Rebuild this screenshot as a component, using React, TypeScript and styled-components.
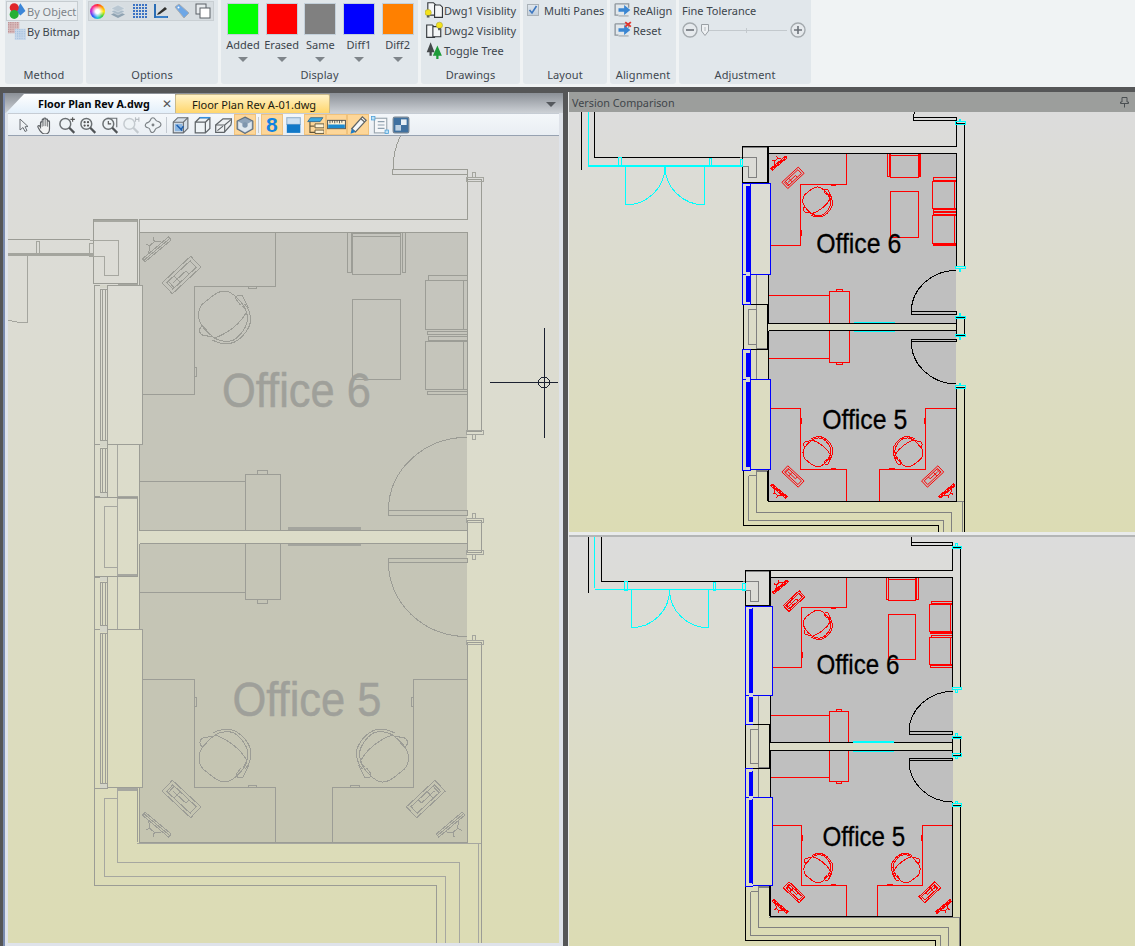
import type { ReactNode } from "react";
import styled, { createGlobalStyle } from "styled-components";

const UI_FONT = `"Noto Sans", "Open Sans", sans-serif`;

const GlobalStyle = createGlobalStyle`
	html, body {
		margin: 0;
		padding: 0;
		background: #555;
	}
`;

const Screen = styled("div")`
	width: 1135px;
	height: 946px;
	overflow: hidden;
	display: flex;
	flex-direction: column;
	background: #555657;
	font-family: ${UI_FONT};
	font-size: 11px;
	color: #3d454c;
`;

/* ---------- ribbon ---------- */

const Ribbon = styled("header")`
	height: 87px;
	flex: none;
	display: flex;
	gap: 3px;
	padding-left: 5px;
	box-sizing: border-box;
	background: #f0f3f4;
`;

const Group = styled("section")<{ $w: number }>`
	width: ${({ $w }) => $w}px;
	height: 84px;
	display: flex;
	flex-direction: column;
	background: #e1e7eb;
	border-radius: 0 0 3px 3px;
`;

const GroupBody = styled("div")`
	flex: 1;
	min-height: 0;
	position: relative;
`;

const GroupLabel = styled("div")`
	height: 18px;
	line-height: 17px;
	text-align: center;
	font-size: 11px;
	letter-spacing: 0.1px;
	color: #3f4850;
	flex: none;
`;

const Row = styled("div")<{ $pad?: number; $dim?: boolean; $boxed?: boolean }>`
	height: 20px;
	display: flex;
	align-items: center;
	gap: 1px;
	padding-left: ${({ $pad }) => $pad ?? 2}px;
	white-space: nowrap;
	color: ${({ $dim }) => ($dim ? "#7d8388" : "#3d454c")};
	box-sizing: border-box;
	${({ $boxed }) =>
		$boxed
			? `margin: 1px 5px 0 1px;
	border: 1px solid #c6ccd0;
	background: #e9edf0;
	padding-left: 1px;`
			: ""}
`;

const OptionStrip = styled("div")`
	margin: 1px 4px 0 2px;
	height: 20px;
	display: flex;
	align-items: center;
	gap: 5.3px;
	background: #d7dde1;
	border: 1px solid #c9cfd3;
	box-sizing: border-box;
	width: 126px;
`;

const OptionCell = styled("span")`
	width: 16px;
	display: flex;
	justify-content: center;
	flex: none;
`;

const Wheel = styled("span")`
	width: 15px;
	height: 15px;
	border-radius: 50%;
	background:
		radial-gradient(circle, #fff 0 18%, transparent 60%),
		conic-gradient(#ff2a2a, #ff9a00, #ffe600, #3fd23f, #1fc7d6, #2a5cff, #b02ad6, #ff2a8a, #ff2a2a);
`;

const SwatchRow = styled("div")`
	display: flex;
	padding: 3px 0 0 6px;
	gap: 6.67px;
`;

const SwatchCol = styled("div")`
	width: 32px;
	display: flex;
	flex-direction: column;
	align-items: center;
`;

const Swatch = styled("div")<{ $c: string }>`
	width: 32px;
	height: 32px;
	background: ${({ $c }) => $c};
	box-sizing: border-box;
	border: 1px solid #c3d0da;
`;

const SwatchName = styled("div")`
	margin-top: 1px;
	height: 17px;
	line-height: 17px;
	white-space: nowrap;
`;

const Caret = styled("div")`
	margin-top: 4px;
	width: 0;
	height: 0;
	border-left: 5px solid transparent;
	border-right: 5px solid transparent;
	border-top: 5px solid #7f858a;
`;

const CheckBox = styled("span")`
	width: 12px;
	height: 12px;
	margin-right: 4px;
	border: 1px solid #aab2b8;
	background: linear-gradient(#dfe6ec, #c4d0dc);
	box-sizing: border-box;
	display: flex;
	align-items: center;
	justify-content: center;
`;

const ToleranceRow = styled("div")`
	display: flex;
	align-items: center;
	height: 18px;
	margin: 1px 0 0 3px;
`;

const Track = styled("div")`
	width: 78px;
	height: 1px;
	background: #c3c9cd;
	position: relative;
	margin-right: 3px;
	&::after {
		content: "";
		position: absolute;
		left: 37px;
		top: -2px;
		width: 1px;
		height: 5px;
		background: #c3c9cd;
	}
`;

/* ---------- document side ---------- */

const Workspace = styled("main")`
	flex: 1;
	min-height: 0;
	display: flex;
	padding-top: 3px;
`;

const DocPanel = styled("section")`
	width: 560px;
	margin: 3px 0 0 3px;
	display: flex;
	flex-direction: column;
	background: #dfe3ea;
	border-left: 2px solid #7b8cb0;
	box-sizing: border-box;
`;

const TabStrip = styled("div")`
	height: 20px;
	flex: none;
	display: flex;
	align-items: flex-end;
	padding: 0 4px 0 1px;
	background: linear-gradient(#8b9097, #cdd1d6);
`;

const ActiveTab = styled("div")`
	width: 169px;
	height: 19px;
	flex: none;
	box-sizing: border-box;
	padding-left: 32px;
	display: flex;
	align-items: center;
	justify-content: space-between;
	font-size: 10.75px;
	font-weight: 700;
	color: #05070a;
	background: linear-gradient(#ffffff, #e3effa);
	clip-path: polygon(18px 0, 100% 0, 100% 100%, 0 100%);
	white-space: nowrap;
`;

const CloseMark = styled("span")`
	font-weight: 400;
	font-size: 12px;
	color: #555;
	margin-right: 3px;
	line-height: 1;
`;

const FileTab = styled("div")`
	width: 155px;
	height: 19px;
	flex: none;
	box-sizing: border-box;
	padding-left: 16px;
	display: flex;
	align-items: center;
	font-size: 11px;
	color: #1a1a10;
	background: linear-gradient(#fff2c6, #ffd66c);
	border: 1px solid #c9b98a;
	border-bottom: none;
	border-radius: 2px 2px 0 0;
	white-space: nowrap;
`;

const TabMenu = styled("span")`
	margin: 0 3px 6px auto;
	width: 0;
	height: 0;
	border-left: 5px solid transparent;
	border-right: 5px solid transparent;
	border-top: 5px solid #55595e;
`;

const ToolBar = styled("div")`
	height: 23px;
	flex: none;
	margin: 0 4px 0 3px;
	display: flex;
	align-items: center;
	padding-left: 4.7px;
	box-sizing: border-box;
	background: linear-gradient(#f4f7fa, #e9eef3);
	border-top: 1px solid #c6ccd4;
	border-bottom: 1px solid #97a2b1;
`;

const ToolButton = styled("span")<{ $on?: boolean }>`
	width: 21.6px;
	height: 21px;
	flex: none;
	box-sizing: border-box;
	display: flex;
	align-items: center;
	justify-content: center;
	${({ $on }) => ($on ? "background: #fdd698; border: 1px solid #f0c27c;" : "")}
`;

const ToolSep = styled("span")`
	width: 1px;
	height: 16px;
	flex: none;
	margin: 0 2.2px;
	background: #c4cad1;
`;

const EightGlyph = styled("span")`
	font-family: "Liberation Sans", sans-serif;
	font-weight: 700;
	font-size: 21px;
	line-height: 1;
	color: #1183e0;
`;

const PANE_BG = "linear-gradient(#dcdcdc, #dcdcb4)";

const DocDrawing = styled("div")`
	flex: 1;
	min-height: 0;
	margin: 0 4px 3px 3px;
	background: ${PANE_BG};
	overflow: hidden;
`;

/* ---------- comparison side ---------- */

const ComparePanel = styled("section")`
	width: 567px;
	margin: 2px 0 0 5px;
	padding-left: 1px;
	box-sizing: border-box;
	display: flex;
	flex-direction: column;
	background: #e9ebeb;
`;

const CompareTitle = styled("div")`
	height: 20px;
	flex: none;
	display: flex;
	align-items: center;
	justify-content: space-between;
	padding: 0 6px 0 3px;
	background: #9c9e9c;
	font-size: 10.8px;
	color: #40454a;
`;

const ComparePane = styled("div")<{ $h: number }>`
	height: ${({ $h }) => $h}px;
	flex: none;
	background: ${PANE_BG};
	overflow: hidden;
`;

const Splitter = styled("div")`
	height: 5px;
	flex: none;
	box-sizing: border-box;
	border-bottom: 2px solid #b4b6b6;
`;

const Canvas = styled("svg")`
	display: block;
	width: 100%;
	height: 100%;
`;

/* ---------- plan drawing ---------- */

const Ink = styled("path")<{ $c: string }>`
	fill: none;
	stroke: ${({ $c }) => $c};
	stroke-width: 1px;
	vector-effect: non-scaling-stroke;
	shape-rendering: crispEdges;
`;

const Solid = styled("path")<{ $c: string }>`
	fill: ${({ $c }) => $c};
	stroke: none;
	shape-rendering: crispEdges;
`;

const RoomName = styled("text")<{ $c: string }>`
	font-family: "Liberation Sans", sans-serif;
	font-size: 49px;
	fill: ${({ $c }) => $c};
	stroke: ${({ $c }) => $c};
	stroke-width: 0.5px;
`;

type Palette = {
	wall: string;
	inner: string;
	furn: string;
	win: string;
	winFill: string;
	cap: string;
	door: string;
	text: string;
	room: string;
};

const GHOST: Palette = {
	wall: "#9b9c95",
	inner: "#a6a7a0",
	furn: "#9c9d96",
	win: "#9d9e97",
	winFill: "none",
	cap: "#d4d5c9",
	door: "#a4a59e",
	text: "#9fa09a",
	room: "rgba(178,178,170,0.55)",
};

const COLOR: Palette = {
	wall: "#000000",
	inner: "#808080",
	furn: "#ff0000",
	win: "#0000ff",
	winFill: "#0000ff",
	cap: "#d4d5e6",
	door: "#00ffff",
	text: "#000000",
	room: "#bfbfbf",
};

const box = (x1: number, y1: number, x2: number, y2: number) =>
	`M${x1} ${y1}H${x2}V${y2}H${x1}Z`;

const ROOMS =
	"M139.5 232H467V530H139.5V444H142V285H139.5Z M139.5 543.5H467V842H139.5V788H142V629H139.5Z";

const WALLS = [
	"M139.5 219.3H467.5V174.6",
	"M139.5 232H467.5V431H481V179H467.5",
	"M139.5 219.3V285 M139.5 444V530H467.5",
	"M139.5 543.5H467.5 M139.5 543.5V629 M139.5 788V842H467.5V642H481V960",
	box(467.5, 520.4, 481, 552),
	box(392, 169, 467.5, 174.6),
	box(388.5, 510, 467.5, 515.3),
	box(388.5, 558.3, 467.5, 562.3),
	"M393 169A75 75 0 0 1 467.5 94",
	"M388.5 510A79 73 0 0 1 467 437.3",
	"M388.5 562.3A79 74 0 0 0 467 636.6",
	"M-188.7 0V261 M-165.8 0V239.7H89.5",
	box(93.5, 219.3, 137.5, 283),
	box(94.5, 497, 137.5, 576),
	"M94.5 788.6V885.3H436.4V960",
	"M137 788.6V842",
].join(" ");

const INNER = [
	"M89.5 240H118V275H104V256H94",
	box(104, 506.6, 117.7, 567),
	"M117.7 497V576 M117.7 444V497 M117.7 577V629",
	"M117.7 788V862.3H459.4V960",
	"M104 798H117.7 M104 798V876.3H445.5V960",
	"M478.5 843.6V960 M137 843.6H481",
].join(" ");

const INNER_BARS = [
	box(93.5, 219.3, 137.5, 222),
	box(117.7, 282.5, 137.5, 285),
	box(117.7, 496, 137.5, 498.5),
	box(117.7, 574, 137.5, 576.5),
	box(117.7, 788, 137.5, 790.5),
].join(" ");

const FURNITURE = [
	"M275 232V286.5H194V394.3H142",
	box(248, 286.5, 256.5, 288.6),
	box(194, 367, 196, 376),
	box(352, 233, 400.4, 274.6),
	"M352 236H400.4",
	box(347, 232, 351, 272.8),
	box(402, 232, 405, 272.8),
	box(352, 299.3, 400.4, 379.3),
	box(425, 280.6, 467, 329),
	box(428, 275.3, 467.5, 280),
	box(427, 331, 467.5, 334),
	box(425, 341.3, 467, 389.6),
	box(428, 336, 467.5, 340),
	box(427, 391.6, 467.5, 394.6),
	"M463.5 281V329 M463.5 342V389",
	"M139.5 481.3H245.8",
	box(245.8, 474, 280, 530),
	box(257.6, 470.4, 267.3, 474),
	"M139.5 592.3H245.8",
	box(245.8, 543.5, 280, 599.6),
	box(257.6, 599.6, 267.3, 603.3),
	"M142 679.3H194V787.3H275V842",
	box(248, 785, 256.5, 787.3),
	box(194, 697, 196, 706),
	"M467.5 679.3H413V787.3H332V842",
	box(350, 785, 359, 787.3),
	box(411, 697, 413, 706),
].join(" ");

const WINDOW_OUTLINE = [
	box(94, 285, 107.6, 444),
	box(107.6, 285, 142, 444),
	box(94, 444, 107.6, 496.6),
	box(94, 577, 107.6, 629.3),
	box(94, 629.3, 107.6, 788.6),
	box(107.6, 629.3, 142, 787.6),
	"M102.5 289V440 M105 289V440 M102.5 448V492 M105 448V492",
	"M102.5 582V625 M105 582V625 M102.5 633V783 M105 633V783",
].join(" ");

const WINDOW_STRIPS = [
	box(100, 289, 107, 440),
	box(100, 448, 107, 492),
	box(100, 582, 107, 625),
	box(100, 633, 107, 783),
];

const WINDOW_CAPS = [
	box(100, 441, 107, 447),
	box(100, 493, 107, 497),
	box(100, 577, 107, 581),
	box(100, 626, 107, 632),
	box(100, 784, 107, 788),
	box(100, 285, 107, 288),
].join(" ");

const DOOR_LINES = [
	"M-177 0V252",
	box(-123, 240, -118, 256),
	box(36, 241, 39.5, 255.6),
	box(89.5, 243, 93.5, 256),
	"M-111.5 255V322.7A69 68 0 0 0 -42.5 255",
	"M27.5 255V322.7A70 68 0 0 1 -42.5 255",
].join(" ");

const DOOR_BARS = [
	box(-177, 252.5, 93, 255.5),
	box(288, 527.3, 360.5, 530),
	box(288, 544, 360.5, 546),
].join(" ");

const hinge = (y: number, dir: number) =>
	`${box(466, y - 2, 483, y + 2)} M472 ${y + dir * 2}V${y + dir * 7}H475V${y + dir * 2}`;

const HINGES = [
	hinge(179, -1),
	hinge(432, 1),
	hinge(520, -1),
	hinge(552, 1),
	hinge(642, -1),
].join(" ");

const CHAIR = [
	"M-26 2C-26 -6 -18 -14 -10 -20C2 -16 16 -6 22 6C20 14 8 27 0 27C-8 27 -14 20 -22 14C-26 10 -26 6 -26 2Z",
	"M-12 -22C-6 -26 4 -27 10 -24C18 -20 26 -10 26 -2C26 4 24 10 20 14",
	"M-10 -20C-4 -24 4 -24 9 -22C16 -18 23 -8 23 -1C23 4 21 9 18 12",
	"M-12 -19L-22 -17C-26 -15 -26 -10 -22 -8L-18 -12",
	"M24 10L18 22C14 24 10 22 12 18L16 13",
].join(" ");

const KEYBOARD = [
	box(-19.5, -7.5, 19.5, 7.5),
	box(-16, -4.5, 16, 4.5),
	"M-6 -4.5V4.5 M-12 0H6 M-14 -4.5V4.5 M6 0V4.5",
].join(" ");

const MONITOR = [
	box(-17, -1.5, 17, 2.5),
	"M-16 0.5H16",
	"M-9 -1.5L-3 -7L-5 -11M9 -1.5L3 -7L5 -11M-3 -7H3",
].join(" ");

const Chair = ({ at, c }: { at: string; c: string }) => (
	<g transform={at}>
		<Ink $c={c} d={CHAIR} />
	</g>
);

const DeskKit = ({ at, c }: { at: string; c: string }) => (
	<g transform={at}>
		<g transform="rotate(-43)">
			<Ink $c={c} d={KEYBOARD} />
		</g>
		<g transform="translate(-25 -26) rotate(-40)">
			<Ink $c={c} d={MONITOR} />
		</g>
	</g>
);

const FloorPlan = ({ p }: { p: Palette }) => (
	<>
		<Solid $c={p.room} d={ROOMS} />
		<Ink $c={p.furn} d={FURNITURE} />
		<Chair c={p.furn} at="translate(224.5 318) scale(1 -1)" />
		<Chair c={p.furn} at="translate(225 755)" />
		<Chair c={p.furn} at="translate(382.5 755) scale(-1 1)" />
		<DeskKit c={p.furn} at="translate(181.5 275)" />
		<DeskKit c={p.furn} at="translate(181.5 799) scale(1 -1)" />
		<DeskKit c={p.furn} at="translate(425.8 799) scale(-1 -1)" />
		<Ink $c={p.inner} d={INNER} />
		<Solid $c={p.inner} d={INNER_BARS} />
		<Ink $c={p.wall} d={WALLS} />
		{p.winFill !== "none" && <Solid $c={p.winFill} d={WINDOW_STRIPS.join(" ")} />}
		<Ink $c={p.win} d={WINDOW_OUTLINE} />
		{p.winFill === "none" && <Ink $c={p.win} d={WINDOW_STRIPS.join(" ")} />}
		<Solid $c={p.cap} d={WINDOW_CAPS} />
		<Ink $c={p.door} d={DOOR_LINES} />
		<Solid $c={p.door} d={DOOR_BARS} />
		<Ink $c={p.door} d={HINGES} />
		<RoomName $c={p.text} x={222} y={406.5} textLength={149} lengthAdjust="spacingAndGlyphs">
			Office 6
		</RoomName>
		<RoomName $c={p.text} x={232.5} y={715.5} textLength={149} lengthAdjust="spacingAndGlyphs">
			Office 5
		</RoomName>
	</>
);

const Crosshair = () => (
	<g>
		<Ink $c="#1b2130" d="M490 382.5H558 M544 328V438" />
		<Ink $c="#1b2130" d="M538.5 382.5A5.5 5.5 0 1 0 549.5 382.5A5.5 5.5 0 1 0 538.5 382.5Z" />
	</g>
);

/* ---------- icons ---------- */

const Ico = ({ children, s = 16 }: { children: ReactNode; s?: number }) => (
	<svg width={s} height={s} viewBox="0 0 16 16" style={{ flex: "none" }}>
		{children}
	</svg>
);

const ByObjectIcon = () => (
	<Ico s={18}>
		<path d="M11 1L15.5 8L11 12L7 8Z" fill="#3b86d8" />
		<circle cx="5.5" cy="5" r="4" fill="#e0262a" />
		<circle cx="5.5" cy="11" r="4" fill="#25b036" />
	</Ico>
);

const ByBitmapIcon = () => (
	<Ico s={18}>
		<defs>
			<pattern id="hatchA" width="2" height="2" patternUnits="userSpaceOnUse">
				<rect width="2" height="2" fill="#d9bcbc" />
				<rect width="1" height="1" fill="#b98b90" />
			</pattern>
			<pattern id="hatchB" width="2" height="2" patternUnits="userSpaceOnUse">
				<rect width="2" height="2" fill="#c8d8ea" />
				<rect width="1" height="1" fill="#9dbcdc" />
			</pattern>
		</defs>
		<rect x="0" y="0" width="10" height="10" fill="url(#hatchA)" />
		<rect x="6" y="6" width="10" height="10" fill="url(#hatchB)" />
	</Ico>
);

const LayersIcon = () => (
	<Ico>
		<path d="M8 8L1 11.5L8 15L15 11.5Z" fill="#8fa3b2" />
		<path d="M8 5L1 8.5L8 12L15 8.5Z" fill="#a9bac7" stroke="#e4eaee" strokeWidth=".5" />
		<path d="M8 2L1 5.5L8 9L15 5.5Z" fill="#b9c7d2" stroke="#e4eaee" strokeWidth=".5" />
	</Ico>
);

const GridIcon = () => (
	<Ico>
		{[1, 4, 7, 10, 13].map((y) =>
			[1, 4, 7, 10, 13].map((x) => (
				<rect key={`${x}-${y}`} x={x} y={y} width="2" height="2" fill="#3d74c4" />
			))
		)}
	</Ico>
);

const FramePenIcon = () => (
	<Ico>
		<path d="M2 1V14H15" fill="none" stroke="#2a6db5" strokeWidth="2" />
		<path d="M3 13H14V15H3Z" fill="#3a80c8" />
		<path d="M5 10L12 4L14 6L7 11L4 12Z" fill="#30302e" />
	</Ico>
);

const TagIcon = () => (
	<Ico>
		<path d="M1 4L5 1L15 10L10 15Z" fill="#6ea7e6" stroke="#a7adb3" strokeWidth="1" />
		<circle cx="4.5" cy="4.5" r="1" fill="#fff" />
	</Ico>
);

const WindowsIcon = () => (
	<Ico>
		<rect x="1" y="1" width="10" height="10" fill="#e8ecef" stroke="#5b6066" />
		<rect x="5" y="5" width="10" height="10" fill="#fff" stroke="#5b6066" />
	</Ico>
);

const Bulb = ({ x, y }: { x: number; y: number }) => (
	<g transform={`translate(${x} ${y})`}>
		<circle cx="2.8" cy="2.8" r="2.8" fill="#f4e21c" stroke="#a8a238" strokeWidth=".5" />
		<rect x="1.6" y="5.2" width="2.4" height="2" fill="#5c6258" />
	</g>
);

const Doc = ({ x, y, h = 11 }: { x: number; y: number; h?: number }) => (
	<path
		d={`M${x} ${y}h5l2 2v${h - 2}h-7z`}
		fill="#f4f6f7"
		stroke="#34383c"
		strokeWidth="1"
	/>
);

const Dwg1Icon = () => (
	<Ico s={18}>
		<Doc x={2.5} y={1.5} />
		<Doc x={8.5} y={3.5} />
		<Bulb x={0} y={7.5} />
	</Ico>
);

const Dwg2Icon = () => (
	<Ico s={18}>
		<Doc x={1.5} y={3.5} />
		<Doc x={7} y={5} h={9} />
		<Bulb x={10} y={1} />
	</Ico>
);

const TreesIcon = () => (
	<Ico s={18}>
		<path d="M5 1L8.5 10H6V13H4V10H1.5Z" fill="#45494c" />
		<path d="M11 4L15 13H12V16H10V13H7Z" fill="#1f9c3a" />
	</Ico>
);

const AlignIcon = ({ cross }: { cross?: boolean }) => (
	<Ico s={18}>
		<path d="M1 2.5H13V6 M1 2.5V12.5H4" fill="none" stroke="#8f979d" strokeWidth="1.2" />
		<path d="M4 12.5H13V14H4Z" fill="#b6bcc1" />
		<path d="M4 6.5H9V3.5L14.5 8L9 12.5V9.5H4Z" fill="#3a86d2" />
		{cross && <path d="M10 1L15 5M15 1L10 5" stroke="#e0342c" strokeWidth="1.7" />}
	</Ico>
);

const CheckMark = () => (
	<svg width="10" height="10" viewBox="0 0 10 10">
		<path d="M1.5 5L4 8L8.5 1" fill="none" stroke="#3e78c0" strokeWidth="1.6" />
	</svg>
);

const RoundButton = ({ plus }: { plus?: boolean }) => (
	<svg width="16" height="16" viewBox="0 0 16 16" style={{ flex: "none" }}>
		<circle cx="8" cy="8" r="7" fill="#e6eaed" stroke="#a4aaae" strokeWidth="1.4" />
		<path d={plus ? "M4 8H12M8 4V12" : "M4 8H12"} stroke="#6c7278" strokeWidth="1.6" />
	</svg>
);

const SliderThumb = () => (
	<svg width="8" height="12" viewBox="0 0 8 12" style={{ flex: "none", margin: "0 0 0 3px" }}>
		<path d="M.5 .5H7.5V7L4 11.5L.5 7Z" fill="#eef1f3" stroke="#9aa0a5" />
		<path d="M4 3V7" stroke="#b4babe" />
	</svg>
);

const PinIcon = () => (
	<svg width="9" height="11" viewBox="0 0 9 11">
		<path d="M2 .5H7V5H8.5V6.5H.5V5H2Z M4.5 6.5V10.5" fill="none" stroke="#4a4f52" />
	</svg>
);

/* toolbar */

const Mag = ({ dim, children }: { dim?: boolean; children?: ReactNode }) => (
	<Ico s={18}>
		<circle cx="6.5" cy="7" r="4.8" fill="#eef3f6" stroke={dim ? "#c4cacf" : "#6a6f72"} strokeWidth="1.3" />
		<path d="M10 10.5L14.5 15" stroke={dim ? "#c4cacf" : "#4f5356"} strokeWidth="2" />
		{children}
	</Ico>
);

const PointerTool = () => (
	<Ico>
		<path d="M5 2L5 13L8 10.5L10 14.5L12 13.5L10 9.8L13 9.5Z" fill="#eef1f4" stroke="#6a6f74" />
	</Ico>
);

const HandTool = () => (
	<Ico s={18}>
		<path
			d="M4 10V6C4 5 5.5 5 5.5 6V3.5C5.5 2.5 7 2.5 7 3.5V2.5C7 1.5 8.7 1.5 8.7 2.5V3.3C8.7 2.4 10.3 2.4 10.3 3.3V5C10.3 4.1 12 4.1 12 5V11C12 14 10.5 16 8 16C5.5 16 4.5 14.5 3.5 13L1.8 10C1.2 8.8 2.7 8 3.4 9Z"
			fill="#f2f3f3"
			stroke="#5a5e62"
		/>
		<path d="M5.5 6V9.5M7 3.5V9M8.7 3.3V9M10.3 5V9.5" stroke="#5a5e62" strokeWidth=".7" />
	</Ico>
);

const OrbitTool = () => (
	<Ico s={18}>
		<path
			d="M8 1.5C10 1.5 10 4 11.5 4.5C14 5 16 7 14.5 9C13 11 11 10 10 12C9 14.5 7.5 15.5 6 14C5 12.5 6 11 3.5 10.5C1 10 .5 8 2 6.5C4 5.5 5 5.5 5.5 4C6 2.5 6.5 1.5 8 1.5Z"
			fill="#eef3f6"
			stroke="#7c8286"
		/>
		<circle cx="8" cy="8" r="1.3" fill="#7c8286" />
	</Ico>
);

const BlueCube = () => (
	<Ico s={18}>
		<path d="M2 5.5L6 1.5H15V11L11 15H2Z" fill="#d6dfe8" stroke="#676c71" />
		<path d="M2 5.5H11V15M11 5.5L15 1.5" fill="none" stroke="#676c71" />
		<path d="M3.5 7H10V13.5H3.5Z" fill="#8db6e0" />
		<path d="M5 8L10 13M9 12L11 9" stroke="#1d5fb0" strokeWidth="1.3" />
	</Ico>
);

const WireCube = () => (
	<Ico s={18}>
		<path d="M2 5.5L6 1.5H15V11L11 15H2V5.5H11V15M11 5.5L15 1.5" fill="#eef3f6" stroke="#5f6468" strokeWidth="1.1" />
		<path d="M6 1.5H15" stroke="#2f8fe0" strokeWidth="1.3" />
	</Ico>
);

const SkewCube = () => (
	<Ico s={18}>
		<path d="M1.5 8L8 2.5H16L15 8L9 14.5H1.5Z" fill="#eef1f3" stroke="#5f6468" strokeWidth="1.1" />
		<path d="M1.5 8H9.5V14.5M9.5 8L16 2.5M3 13L8 9" fill="none" stroke="#5f6468" />
	</Ico>
);

const ShadedCube = () => (
	<Ico s={18}>
		<path d="M8 1L15 4.5V11.5L8 15.5L1 11.5V4.5Z" fill="#8fa4ba" stroke="#5f6e7e" />
		<path d="M8 8L2 4.8V11L8 14.5ZM8 8L14 4.8V11L8 14.5Z" fill="#dfe7ee" />
		<circle cx="8" cy="8" r="2.4" fill="#7f96ae" />
	</Ico>
);

const BlockTool = () => (
	<Ico s={18}>
		<rect x="2.5" y="1.5" width="12" height="6" fill="#cfe1f2" stroke="#98b4cf" />
		<rect x="2.5" y="7.5" width="12" height="7.5" fill="#1178c8" />
	</Ico>
);

const TreeTrayTool = () => (
	<Ico s={18}>
		<path d="M4 1.5H15L12.5 5H1.5Z" fill="#3aa8e0" stroke="#2a5f88" strokeWidth=".7" />
		<path d="M3.5 5V14.5H8" fill="none" stroke="#5e5338" strokeWidth="1" />
		<path d="M3.5 9H7.5" stroke="#5e5338" />
		<path d="M8 7H16V10.5H8Z" fill="#fff3d6" stroke="#5e5338" strokeWidth=".8" />
		<path d="M8 12.5H16V15.5H8Z" fill="#fff3d6" stroke="#5e5338" strokeWidth=".8" />
	</Ico>
);

const RulerTool = () => (
	<Ico s={19}>
		<rect x=".5" y="4.5" width="15" height="7" fill="#fff3d6" stroke="#4a4f50" strokeWidth=".8" />
		<rect x="1" y="8" width="14" height="3" fill="#1b8ad0" />
		<path d="M2.5 4.5V7M4.5 4.5V6.5M6.5 4.5V7M8.5 4.5V6.5M10.5 4.5V7M12.5 4.5V6.5" stroke="#3a3d3d" strokeWidth=".7" />
	</Ico>
);

const PencilTool = () => (
	<Ico s={20}>
		<path d="M3 11L11.5 1.5L14.5 4.3L6 13.5Z" fill="#f5f7f8" stroke="#5f6466" />
		<path d="M3 11L2 15L6 13.5Z" fill="#1c7cc8" />
		<path d="M10.3 3L13.3 5.6" stroke="#5f6466" />
	</Ico>
);

const TreeDocTool = () => (
	<Ico s={18}>
		<rect x="3" y="2" width="11" height="13" fill="#f5f7f9" stroke="#9aa5ae" />
		<path d="M6 5H12M6 8H12M6 11H12" stroke="#8ea0ae" />
		<rect x="0.5" y="0.5" width="3" height="3" fill="#bfe0f4" stroke="#4ea1d8" strokeWidth=".7" />
		<rect x="12.5" y="12.5" width="3" height="3" fill="#bfe0f4" stroke="#4ea1d8" strokeWidth=".7" />
	</Ico>
);

const CheckerTool = () => (
	<Ico s={18}>
		<rect x="1" y="1" width="14" height="14" rx="1.5" fill="#3f709f" stroke="#7a8896" />
		<rect x="8" y="3" width="5" height="5" fill="#e8f0f6" />
		<rect x="3" y="8" width="5" height="5" fill="#bcd0e2" />
	</Ico>
);

const App = () => {
	const swatches = [
		{ name: "Added", color: "#00ff00" },
		{ name: "Erased", color: "#ff0000" },
		{ name: "Same", color: "#808080" },
		{ name: "Diff1", color: "#0000ff" },
		{ name: "Diff2", color: "#ff8000" },
	];

	return (
		<Screen>
			<GlobalStyle />
			<Ribbon>
				<Group $w={78}>
					<GroupBody>
						<Row $boxed $dim>
							<ByObjectIcon />
							By Object
						</Row>
						<Row $pad={3}>
							<ByBitmapIcon />
							By Bitmap
						</Row>
					</GroupBody>
					<GroupLabel>Method</GroupLabel>
				</Group>
				<Group $w={132}>
					<GroupBody>
						<OptionStrip>
							<OptionCell>
								<Wheel />
							</OptionCell>
							<OptionCell>
								<LayersIcon />
							</OptionCell>
							<OptionCell>
								<GridIcon />
							</OptionCell>
							<OptionCell>
								<FramePenIcon />
							</OptionCell>
							<OptionCell>
								<TagIcon />
							</OptionCell>
							<OptionCell>
								<WindowsIcon />
							</OptionCell>
						</OptionStrip>
					</GroupBody>
					<GroupLabel>Options</GroupLabel>
				</Group>
				<Group $w={197}>
					<GroupBody>
						<SwatchRow>
							{swatches.map((s) => (
								<SwatchCol key={s.name}>
									<Swatch $c={s.color} />
									<SwatchName>{s.name}</SwatchName>
									<Caret />
								</SwatchCol>
							))}
						</SwatchRow>
					</GroupBody>
					<GroupLabel>Display</GroupLabel>
				</Group>
				<Group $w={99}>
					<GroupBody>
						<Row $pad={4}>
							<Dwg1Icon />
							Dwg1 Visiblity
						</Row>
						<Row $pad={4}>
							<Dwg2Icon />
							Dwg2 Visiblity
						</Row>
						<Row $pad={4}>
							<TreesIcon />
							Toggle Tree
						</Row>
					</GroupBody>
					<GroupLabel>Drawings</GroupLabel>
				</Group>
				<Group $w={84}>
					<GroupBody>
						<Row $pad={4}>
							<CheckBox>
								<CheckMark />
							</CheckBox>
							Multi Panes
						</Row>
					</GroupBody>
					<GroupLabel>Layout</GroupLabel>
				</Group>
				<Group $w={66}>
					<GroupBody>
						<Row $pad={4}>
							<AlignIcon />
							ReAlign
						</Row>
						<Row $pad={4}>
							<AlignIcon cross />
							Reset
						</Row>
					</GroupBody>
					<GroupLabel>Alignment</GroupLabel>
				</Group>
				<Group $w={132}>
					<GroupBody>
						<Row $pad={3}>Fine Tolerance</Row>
						<ToleranceRow>
							<RoundButton />
							<SliderThumb />
							<Track />
							<RoundButton plus />
						</ToleranceRow>
					</GroupBody>
					<GroupLabel>Adjustment</GroupLabel>
				</Group>
			</Ribbon>
			<Workspace>
				<DocPanel>
					<TabStrip>
						<ActiveTab>
							Floor Plan Rev A.dwg
							<CloseMark>✕</CloseMark>
						</ActiveTab>
						<FileTab>Floor Plan Rev A-01.dwg</FileTab>
						<TabMenu />
					</TabStrip>
					<ToolBar>
						<ToolButton>
							<PointerTool />
						</ToolButton>
						<ToolButton>
							<HandTool />
						</ToolButton>
						<ToolButton>
							<Mag>
								<path d="M13 1V5M11 3H15" stroke="#555" />
							</Mag>
						</ToolButton>
						<ToolButton>
							<Mag>
								<circle cx="5" cy="5.5" r="1" fill="#555" />
								<circle cx="8" cy="5.5" r="1" fill="#555" />
								<circle cx="5" cy="8.5" r="1" fill="#555" />
								<circle cx="8" cy="8.5" r="1" fill="#555" />
							</Mag>
						</ToolButton>
						<ToolButton>
							<Mag>
								<path d="M5 2H14V10" fill="none" stroke="#6a6f73" />
								<path d="M6.5 4.5V7H9" fill="none" stroke="#555" />
							</Mag>
						</ToolButton>
						<ToolButton>
							<Mag dim>
								<path d="M12 1V5M15 1V5M12 3H15" stroke="#b8bec3" />
							</Mag>
						</ToolButton>
						<ToolButton>
							<OrbitTool />
						</ToolButton>
						<ToolSep />
						<ToolButton>
							<BlueCube />
						</ToolButton>
						<ToolButton>
							<WireCube />
						</ToolButton>
						<ToolButton>
							<SkewCube />
						</ToolButton>
						<ToolButton $on>
							<ShadedCube />
						</ToolButton>
						<ToolSep />
						<ToolButton $on>
							<EightGlyph>8</EightGlyph>
						</ToolButton>
						<ToolButton>
							<BlockTool />
						</ToolButton>
						<ToolButton $on>
							<TreeTrayTool />
						</ToolButton>
						<ToolButton $on>
							<RulerTool />
						</ToolButton>
						<ToolButton $on>
							<PencilTool />
						</ToolButton>
						<ToolButton>
							<TreeDocTool />
						</ToolButton>
						<ToolButton>
							<CheckerTool />
						</ToolButton>
					</ToolBar>
					<DocDrawing>
						<Canvas viewBox="8 136 551 807" preserveAspectRatio="xMinYMin meet">
							<FloorPlan p={GHOST} />
							<Crosshair />
						</Canvas>
					</DocDrawing>
				</DocPanel>
				<ComparePanel>
					<CompareTitle>
						Version Comparison
						<PinIcon />
					</CompareTitle>
					<ComparePane $h={420}>
						<Canvas viewBox="569 112 566 420" preserveAspectRatio="xMinYMin meet">
							<g transform="translate(689.26 21.06) scale(0.5716 0.57)">
								<FloorPlan p={COLOR} />
							</g>
						</Canvas>
					</ComparePane>
					<Splitter />
					<ComparePane $h={409}>
						<Canvas viewBox="569 537 566 409" preserveAspectRatio="xMinYMin meet">
							<g transform="translate(693.2 448.4) scale(0.5557 0.5555)">
								<FloorPlan p={COLOR} />
							</g>
						</Canvas>
					</ComparePane>
				</ComparePanel>
			</Workspace>
		</Screen>
	);
};

export default App;
